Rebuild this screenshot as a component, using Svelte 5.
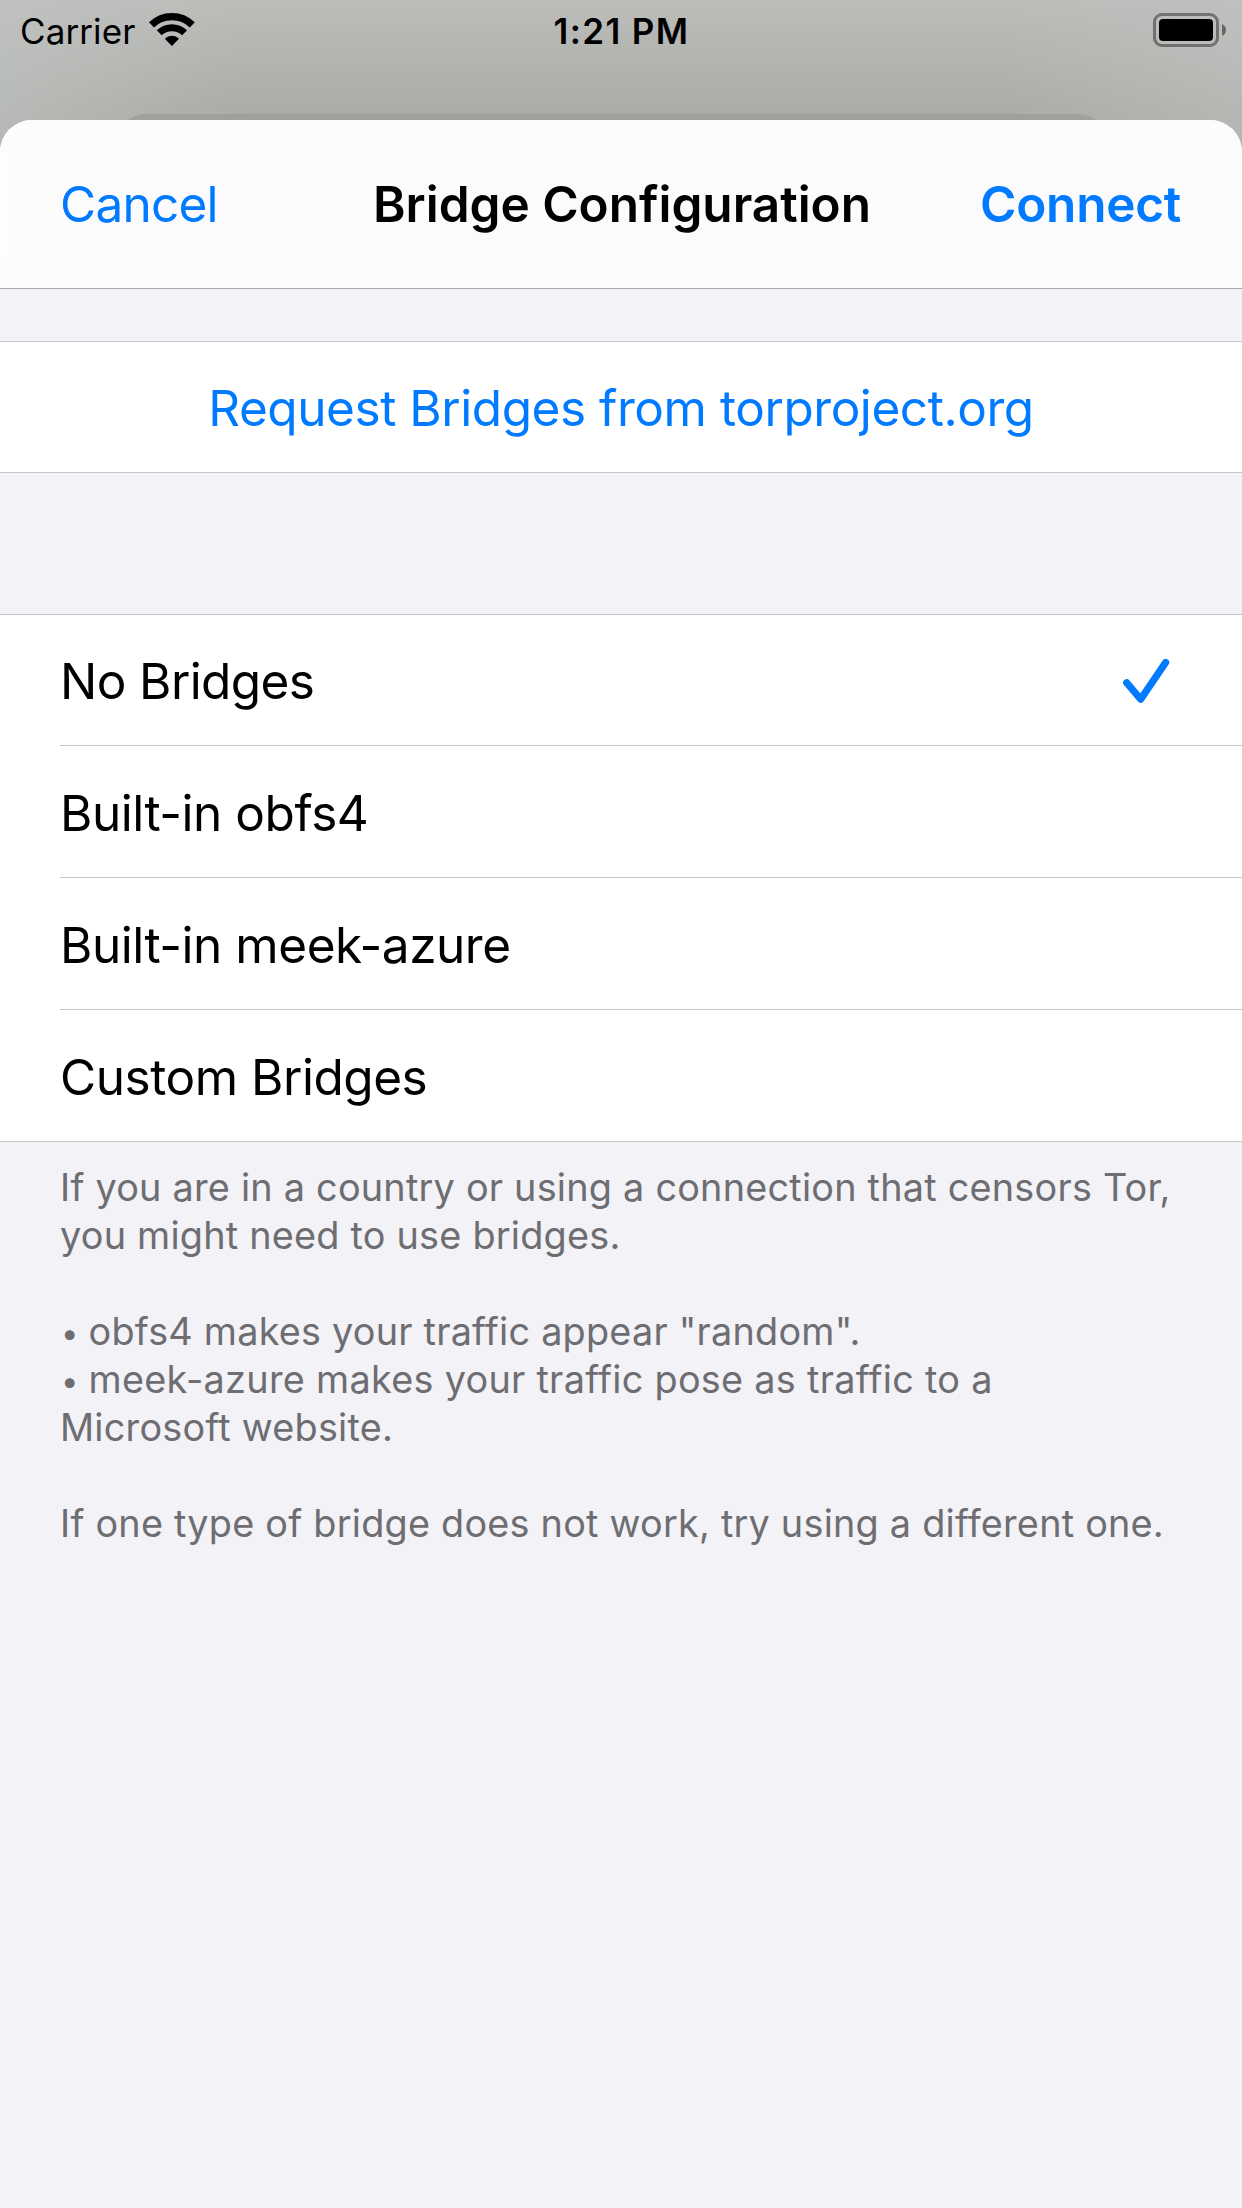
<script>
  const options = [
    { id: 'none', label: 'No Bridges' },
    { id: 'obfs4', label: 'Built-in obfs4' },
    { id: 'meek', label: 'Built-in meek-azure' },
    { id: 'custom', label: 'Custom Bridges' }
  ];
  let selected = $state('none');
</script>

<div class="screen">
  <header class="status">
    <div class="carrier">
      <span>Carrier</span>
      <svg class="wifi" viewBox="0 0 46 34" aria-hidden="true">
        <path d="M2.5 12.9A29.4 29.4 0 0 1 43.3 12.9" fill="none" stroke="#000" stroke-width="7.2" />
        <path d="M10.2 20.8A18.3 18.3 0 0 1 35.6 20.8" fill="none" stroke="#000" stroke-width="7" />
        <path d="M22.9 34L15.8 26.7A10.2 10.2 0 0 1 30 26.7Z" />
      </svg>
    </div>
    <div class="time">1:21 PM</div>
    <svg class="battery" viewBox="0 0 73 34" aria-hidden="true">
      <rect x="1.5" y="1.5" width="63" height="31" rx="7.5" fill="none" stroke="#000" stroke-opacity=".4" stroke-width="3" />
      <rect x="6" y="6" width="54" height="22" rx="4" />
      <path d="M69 11C71.4 12 73 14.3 73 17S71.4 22 69 23Z" fill-opacity=".45" />
    </svg>
  </header>

  <div class="backcard"></div>

  <main class="sheet">
    <nav>
      <button class="cancel">Cancel</button>
      <h1>Bridge Configuration</h1>
      <button class="connect">Connect</button>
    </nav>

    <section class="group request">
      <button class="row link">Request Bridges from torproject.org</button>
    </section>

    <section class="group choices">
      {#each options as option (option.id)}
        <button class="row option" class:selected={selected === option.id} onclick={() => (selected = option.id)}>
          <span class="label">{option.label}</span>
          {#if selected === option.id}
            <svg class="check" viewBox="0 0 46 44" aria-hidden="true">
              <path d="M3.7 23.7L17.7 40.3L42.6 3.6" />
            </svg>
          {/if}
        </button>
      {/each}
    </section>

    <footer>
      <p>If you are in a country or using a connection that censors Tor,<br />you might need to use bridges.</p>
      <p>
        <span class="bullet">•</span> obfs4 makes your traffic appear "random".<br /><span class="bullet">•</span> <span class="loose">meek-azure makes your traffic pose as traffic to a</span><br />Microsoft website.
      </p>
      <p>If one type of bridge does not work, try using a different one.</p>
    </footer>
  </main>
</div>

<style>
  :global(body) {
    margin: 0;
  }

  .screen {
    position: relative;
    display: flex;
    flex-direction: column;
    width: 1242px;
    height: 2208px;
    overflow: hidden;
    font-family: Inter, 'Liberation Sans', sans-serif;
    color: #000;
    background:
      linear-gradient(100deg, rgba(193, 197, 194, 0.6), rgba(193, 197, 194, 0) 20%) 0 0 / 100% 160px no-repeat,
      linear-gradient(260deg, rgba(193, 197, 194, 0.5), rgba(193, 197, 194, 0) 20%) 0 0 / 100% 160px no-repeat,
      linear-gradient(#bdbcba 0, #b3b5b1 55px, #aaaca7 114px) 0 0 / 100% 160px no-repeat;
  }

  button {
    margin: 0;
    padding: 0;
    border: 0;
    background: none;
    font: inherit;
    color: #007aff;
  }

  .status {
    display: grid;
    grid-template-columns: 1fr auto 1fr;
    flex: none;
    height: 120px;
    font-size: 35px;
    line-height: 63px;
  }

  .carrier {
    display: flex;
    padding-left: 20px;
    letter-spacing: 0.1px;
  }

  .wifi {
    width: 46px;
    height: 34px;
    margin: 12px 0 0 13.5px;
  }

  .time {
    padding-left: 1px;
    font-weight: 600;
    letter-spacing: 1.4px;
  }

  .battery {
    justify-self: end;
    width: 73px;
    height: 34px;
    margin: 13px 16px 0 0;
  }

  /* Top edge of the sheet stacked underneath */
  .backcard {
    position: absolute;
    top: 114px;
    left: 116px;
    width: 992px;
    height: 60px;
    border-radius: 30px 30px 0 0;
    background: #9fa19f;
  }

  .sheet {
    position: relative;
    flex: 1;
    overflow: hidden;
    border-radius: 32px 32px 0 0;
    background: #f2f2f7;
    font-size: 49.5px;
  }

  nav {
    display: grid;
    grid-template-columns: 1fr auto 1fr;
    box-sizing: border-box;
    height: 169px;
    padding: 0 61px 0 60px;
    border-bottom: 1px solid #a7a7ab;
    background: linear-gradient(90deg, #fdfdfd, #fbfbfd 10%, #fbfbfd 90%, #fcfcfc);
    line-height: 168px;
  }

  nav button {
    line-height: 168px;
  }

  .cancel {
    justify-self: start;
    letter-spacing: -0.75px;
  }

  h1 {
    margin: 0;
    padding-left: 3px;
    font-size: inherit;
    font-weight: 600;
    letter-spacing: -0.02px;
  }

  .connect {
    justify-self: end;
    font-weight: 600;
    letter-spacing: -0.25px;
  }

  .group {
    border-top: 1px solid #c6c6c8;
    background: #fff;
  }

  .request {
    margin-top: 52px;
  }

  .choices {
    margin-top: 141px;
    border-bottom: 1px solid #c6c6c8;
  }

  .row {
    display: flex;
    align-items: center;
    box-sizing: border-box;
    width: 100%;
    height: 131px;
    padding-top: 2px;
    line-height: 128px;
  }

  .link {
    justify-content: center;
    border-bottom: 1px solid #c6c6c8;
    letter-spacing: -0.45px;
  }

  .option {
    width: auto;
    min-width: calc(100% - 60px);
    margin-left: 60px;
    padding-right: 73px;
    justify-content: space-between;
    border-bottom: 1px solid #c6c6c8;
    color: #000;
    letter-spacing: -0.46px;
  }

  .selected {
    letter-spacing: -0.6px;
  }

  .option + .option {
    height: 132px;
    padding-top: 3px;
  }

  .option:last-child {
    height: 131px;
    border-bottom: 0;
  }

  .check {
    width: 46px;
    height: 44px;
    overflow: visible;
    fill: none;
    stroke: #007aff;
    stroke-width: 7.2;
    stroke-linecap: round;
    stroke-linejoin: round;
  }

  footer {
    padding: 21px 60px 0;
    font-size: 37.8px;
    line-height: 48px;
    letter-spacing: 0.23px;
    color: #6d6d72;
    white-space: nowrap;
  }

  footer p {
    margin: 0 0 48px;
  }

  .bullet {
    margin: 0 -1px 0 1px;
    font-size: 31px;
    line-height: 1;
    vertical-align: 1px;
  }

  .loose {
    letter-spacing: 0.29px;
  }
</style>
